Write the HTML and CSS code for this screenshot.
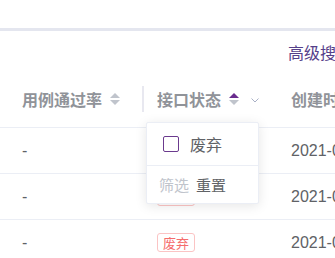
FILE: index.html
```html
<!DOCTYPE html>
<html lang="zh">
<head>
<meta charset="utf-8">
<link rel="stylesheet" href="styles.css">
</head>
<body>
<div class="page">
  <div class="bar"></div>
  <div class="toolbar"><span class="adv">高级搜索</span></div>
  <div class="table">
    <div class="row head">
      <div class="cell c1"><span class="th">用例通过率</span><span class="sort"><i class="up"></i><i class="down"></i></span></div>
      <div class="cell c2 divided"><span class="th">接口状态</span><span class="sort"><i class="up on"></i><i class="down"></i></span>
        <svg class="chev" width="8" height="5" viewBox="0 0 8 5"><polyline points="0.5,0.5 4,4 7.5,0.5" fill="none" stroke="#a9b0c6" stroke-width="1"/></svg>
      </div>
      <div class="cell c3"><span class="th">创建时间</span></div>
    </div>
    <div class="row">
      <div class="cell c1 td">-</div>
      <div class="cell c2"><span class="tag">废弃</span></div>
      <div class="cell c3 td">2021-04-01</div>
    </div>
    <div class="row">
      <div class="cell c1 td">-</div>
      <div class="cell c2"><span class="tag">废弃</span></div>
      <div class="cell c3 td">2021-04-01</div>
    </div>
    <div class="row">
      <div class="cell c1 td">-</div>
      <div class="cell c2"><span class="tag">废弃</span></div>
      <div class="cell c3 td">2021-04-01</div>
    </div>
  </div>
  <div class="filter">
    <div class="filter-list">
      <label class="opt"><span class="box"></span><span class="opt-text">废弃</span></label>
    </div>
    <div class="filter-foot">
      <span class="btn disabled">筛选</span><span class="btn">重置</span>
    </div>
  </div>
</div>
</body>
</html>
```
FILE: styles.css
```css
html, body {
  margin: 0;
  padding: 0;
  background: #fff;
  overflow: hidden;
}
body {
  font-family: "Noto Sans CJK SC", "Liberation Sans", sans-serif;
  width: 335px;
  height: 258px;
}
.page {
  position: relative;
  width: 420px;
  padding-top: 28px;
}
.bar {
  height: 3px;
  background: #e4e6ef;
}
.toolbar {
  height: 42px;
  display: flex;
  align-items: center;
  padding-left: 288px;
}
.adv {
  font-size: 16px;
  color: #55408a;
  line-height: 1;
  white-space: nowrap;
}
.table {
  width: 420px;
}
.row {
  display: flex;
  align-items: center;
  height: 46px;
  box-sizing: border-box;
  border-bottom: 1px solid #ebeef5;
}
.row.head {
  height: 55px;
  padding-bottom: 3px;
}
.cell {
  display: flex;
  align-items: center;
  box-sizing: border-box;
  height: 100%;
  position: relative;
  white-space: nowrap;
}
.c1 { width: 143px; padding-left: 22px; }
.c2 { width: 134px; padding-left: 14px; }
.c3 { flex: 1; padding-left: 14px; }
.divided::before {
  content: "";
  position: absolute;
  left: -1px;
  top: 13px;
  width: 2px;
  height: 26px;
  background: #e8e8f0;
}
.th {
  font-size: 16px;
  font-weight: 700;
  color: #909399;
  line-height: 1;
}
.sort {
  display: inline-flex;
  flex-direction: column;
  gap: 2px;
  margin-left: 8px;
}
.sort i {
  display: block;
  width: 0;
  height: 0;
  border-left: 5px solid transparent;
  border-right: 5px solid transparent;
}
.sort .up { border-bottom: 5px solid #c0c4cc; }
.sort .up.on { border-bottom-color: #6a2c8e; }
.sort .down { border-top: 5px solid #c0c4cc; }
.chev {
  margin-left: 12px;
  margin-top: 3px;
}
.td {
  font-family: "Liberation Sans", "Noto Sans CJK SC", sans-serif;
  font-size: 16px;
  color: #606266;
}
.tag {
  display: inline-block;
  font-size: 13px;
  line-height: 17px;
  padding: 0 5px;
  color: #f56c6c;
  border: 1px solid #fbc4c4;
  border-radius: 3px;
  background: #fff;
}
.filter {
  position: absolute;
  left: 146px;
  top: 122px;
  width: 113px;
  height: 82px;
  box-sizing: border-box;
  background: #fff;
  border: 1px solid #ebeef5;
  border-radius: 2px;
  box-shadow: 0 2px 12px rgba(0, 0, 0, 0.1);
  display: flex;
  flex-direction: column;
}
.filter-list {
  height: 42px;
  display: flex;
  align-items: center;
  padding-left: 16px;
  border-bottom: 1px solid #ebeef5;
}
.opt {
  display: flex;
  align-items: center;
}
.box {
  width: 16px;
  height: 16px;
  box-sizing: border-box;
  border: 1px solid #6b3a8e;
  border-radius: 2px;
  margin-right: 11px;
}
.opt-text {
  font-size: 16px;
  color: #606266;
  line-height: 1;
}
.filter-foot {
  flex: 1;
  display: flex;
  align-items: center;
  padding-left: 12px;
  gap: 7px;
}
.btn {
  font-size: 15px;
  color: #606266;
  line-height: 1;
}
.btn.disabled {
  color: #c0c4cc;
}
```
